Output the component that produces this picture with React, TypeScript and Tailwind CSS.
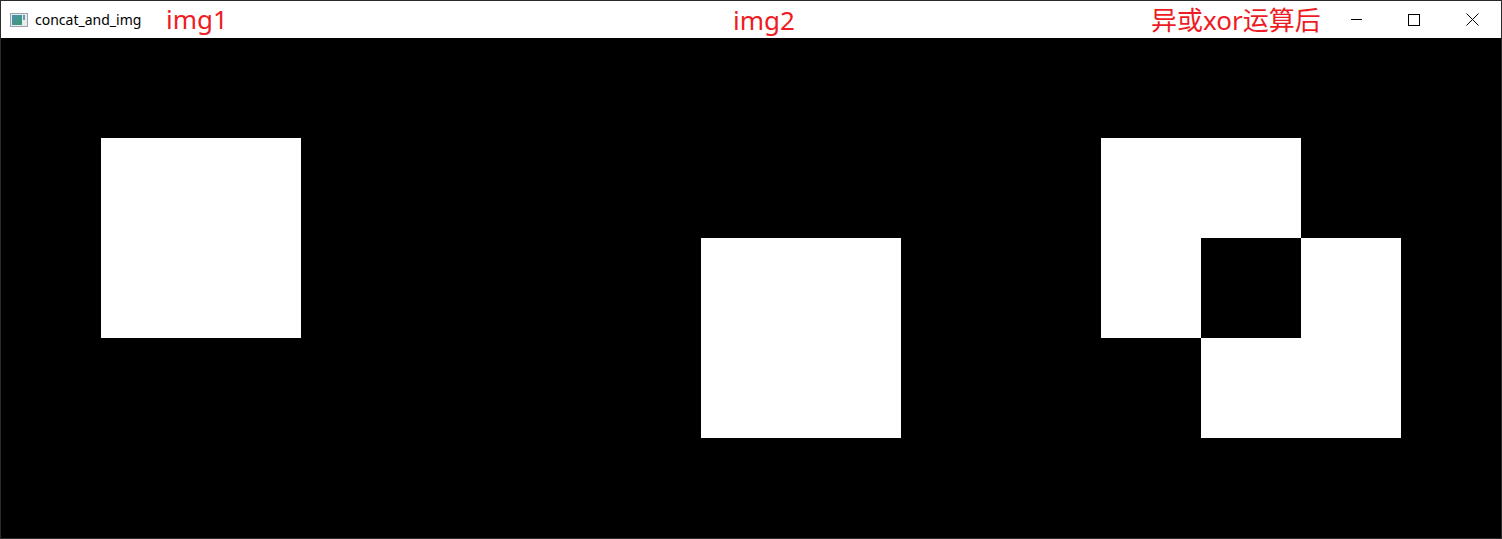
import React from "react";

export default function App() {
  return (
    <div className="w-[1502px] h-[539px] border border-[#2b2b2b] bg-white flex flex-col relative">
      <div className="h-[37px] flex items-center bg-white relative">
        <div className="ml-[9px] w-[18px] h-[14px] border border-[#9aa4a8] bg-[#e8ecee] flex p-[1px] gap-[1px]">
          <div className="w-[10px] h-full bg-gradient-to-br from-[#4f8fb0] to-[#3c9a6a]"></div>
          <div className="w-[2px] h-[5px] bg-[#6a9ab8]"></div>
        </div>
        <span className="ml-[7px] text-[14px] text-black leading-none" style={{ fontFamily: '"Noto Sans", "Open Sans", sans-serif' }}>
          concat_and_img
        </span>
        <div className="ml-auto flex h-full">
          <div className="w-[58px] h-full flex items-center justify-center">
            <div className="w-[11px] h-[1px] bg-black"></div>
          </div>
          <div className="w-[58px] h-full flex items-center justify-center">
            <div className="w-[12px] h-[12px] border border-black"></div>
          </div>
          <div className="w-[58px] h-full flex items-center justify-center">
            <svg width="13" height="13" viewBox="0 0 13 13">
              <path d="M0.5 0.5 L12.5 12.5 M12.5 0.5 L0.5 12.5" stroke="black" strokeWidth="1" />
            </svg>
          </div>
        </div>
        <span className="absolute left-[165px] top-[2px] text-[26px] leading-[32px] text-[#ee1c25]" style={{ fontFamily: '"Noto Sans", "Noto Sans CJK SC", sans-serif' }}>img1</span>
        <span className="absolute left-[732px] top-[3px] text-[26px] leading-[32px] text-[#ee1c25]" style={{ fontFamily: '"Noto Sans", "Noto Sans CJK SC", sans-serif' }}>img2</span>
        <span className="absolute left-[1150px] top-[3px] text-[26px] leading-[32px] text-[#ee1c25]" style={{ fontFamily: '"Noto Sans", "Noto Sans CJK SC", sans-serif' }}>异或xor运算后</span>
      </div>
      <div className="flex h-[500px] bg-black">
        <div className="w-[500px] h-[500px] pl-[100px] pt-[100px]">
          <div className="w-[200px] h-[200px] bg-white"></div>
        </div>
        <div className="w-[500px] h-[500px] pl-[200px] pt-[200px]">
          <div className="w-[200px] h-[200px] bg-white"></div>
        </div>
        <div className="w-[500px] h-[500px] pl-[100px] pt-[100px]">
          <div className="grid grid-cols-[100px_100px_100px] grid-rows-[100px_100px_100px]">
            <div className="bg-white"></div>
            <div className="bg-white"></div>
            <div className="bg-black"></div>
            <div className="bg-white"></div>
            <div className="bg-black"></div>
            <div className="bg-white"></div>
            <div className="bg-black"></div>
            <div className="bg-white"></div>
            <div className="bg-white"></div>
          </div>
        </div>
      </div>
    </div>
  );
}
